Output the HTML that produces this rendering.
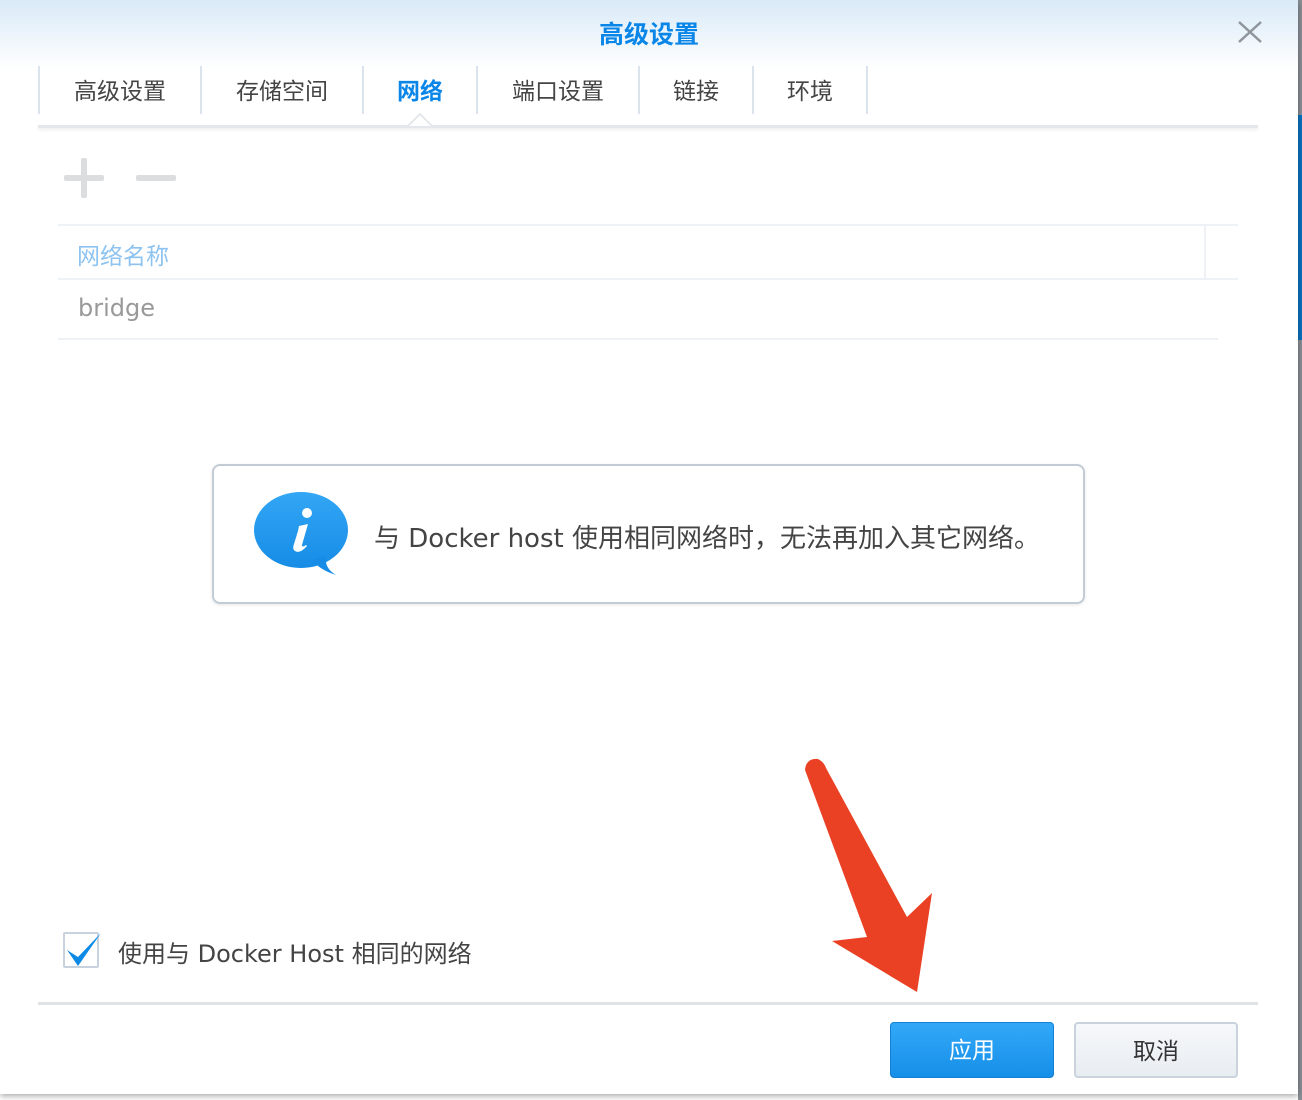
<!DOCTYPE html>
<html><head><meta charset="utf-8"><style>
*{margin:0;padding:0;box-sizing:border-box}
body{width:1302px;height:1100px;overflow:hidden;background:#fff;font-family:"DejaVu Sans","Noto Sans CJK SC",sans-serif;position:relative}
.dlg{position:absolute;left:0;top:0;width:1298px;height:1094px;background:#fff;box-shadow:0 2px 6px rgba(0,0,0,.35)}
.hdr{position:absolute;left:0;top:0;width:1298px;height:70px;background:linear-gradient(#d9eaf8,#fff)}
.title{position:absolute;left:0;width:1298px;top:15px;text-align:center;font-size:25px;font-weight:bold;color:#0a86e8}
.tab{position:absolute;top:66px;height:48px;border-left:2px solid #dbe3ec;font-size:23px;color:#444;line-height:52px;text-align:center}
.tabline{position:absolute;left:38px;top:125px;width:1220px;height:3px;background:#e4e8ec;box-shadow:0 2px 3px rgba(0,0,0,.08)}
.ln{position:absolute;height:2px;background:#eef1f5}
.btn{position:absolute;top:1022px;width:164px;height:56px;border-radius:4px;font-size:23px;text-align:center;line-height:56px}
</style></head><body>
<div style="position:absolute;right:0;top:0;width:4px;height:1100px;background:#8a8f96"></div>
<div style="position:absolute;right:0;top:115px;width:4px;height:225px;background:#0a72c0"></div>
<div class="dlg">
<div class="hdr"></div>
<div class="title">高级设置</div>
<svg style="position:absolute;left:1237px;top:20px" width="26" height="24"><path d="M2 2L24 22M24 2L2 22" stroke="#8f959b" stroke-width="2.5"/></svg>
<div class="tab" style="left:38px;width:162px">高级设置</div>
<div class="tab" style="left:200px;width:162px">存储空间</div>
<div class="tab" style="left:362px;width:114px;color:#0a86e8;font-weight:bold">网络</div>
<div class="tab" style="left:476px;width:162px">端口设置</div>
<div class="tab" style="left:638px;width:114px">链接</div>
<div class="tab" style="left:752px;width:114px">环境</div>
<div class="tab" style="left:866px;width:2px"></div>
<div class="tabline"></div>
<svg style="position:absolute;left:405px;top:112px" width="30" height="16"><path d="M2 15L15 2L28 15Z" fill="#fff" stroke="#e4e8ec" stroke-width="2"/></svg>
<div style="position:absolute;left:64px;top:175px;width:40px;height:6px;background:#dcdddf;border-radius:2px"></div>
<div style="position:absolute;left:81px;top:158px;width:6px;height:40px;background:#dcdddf;border-radius:2px"></div>
<div style="position:absolute;left:136px;top:175px;width:40px;height:6px;background:#dcdddf;border-radius:2px"></div>
<div class="ln" style="left:58px;top:224px;width:1180px"></div>
<div style="position:absolute;left:1204px;top:226px;width:2px;height:52px;background:#eef1f5"></div>
<div style="position:absolute;left:77px;top:237px;font-size:23px;color:#8ec3f0">网络名称</div>
<div class="ln" style="left:58px;top:278px;width:1180px"></div>
<div style="position:absolute;left:78px;top:294px;font-size:24px;color:#999">bridge</div>
<div class="ln" style="left:58px;top:338px;width:1160px"></div>
<div style="position:absolute;left:212px;top:464px;width:873px;height:140px;border:2px solid #c3ccd6;border-radius:8px;background:#fff;box-shadow:0 1px 3px rgba(0,0,0,.1)"></div>
<svg style="position:absolute;left:252px;top:490px" width="100" height="90"><defs><linearGradient id="g" x1="0" y1="0" x2="0" y2="1"><stop offset="0" stop-color="#33a6f5"/><stop offset="1" stop-color="#168ce6"/></linearGradient></defs><ellipse cx="49" cy="40" rx="47" ry="38" fill="url(#g)"/><path d="M60 70Q68 80 84 85Q72 78 74 66Z" fill="#168ce6"/><circle cx="55" cy="23" r="5" fill="#fff"/><path d="M47 36L56 34L50 55Q50 58 54 55L55 56Q48 64 43 61Q40 59 42 54L46 41Z" fill="#fff"/></svg>
<div style="position:absolute;left:374px;top:518px;font-size:26px;color:#444">与 Docker host 使用相同网络时，无法再加入其它网络。</div>
<div style="position:absolute;left:63px;top:932px;width:36px;height:36px;border:2px solid #c8d2de;border-radius:2px;background:#fff"></div>
<svg style="position:absolute;left:64px;top:930px" width="40" height="40"><path d="M3 20L14 36L37 3L14 27Z" fill="#0d8ae6"/></svg>
<div style="position:absolute;left:118px;top:934px;font-size:24px;color:#444">使用与 Docker Host 相同的网络</div>
<div style="position:absolute;left:38px;top:1002px;width:1220px;height:3px;background:#e0e3e6"></div>
<div class="btn" style="left:890px;background:linear-gradient(#33a8f8,#168fe8);border:1px solid #1380d4;color:#fff">应用</div>
<div class="btn" style="left:1074px;background:linear-gradient(#f6f8fa,#e8edf2);border:2px solid #cad3dd;color:#333">取消</div>
</div>
<svg style="position:absolute;left:0;top:0" width="1302" height="1100"><path d="M805 770Q806 758 818 759Q824 762 826 768L907 917L932 893L917 992L832 941L867 937Z" fill="#ea4125"/></svg>
</body></html>
